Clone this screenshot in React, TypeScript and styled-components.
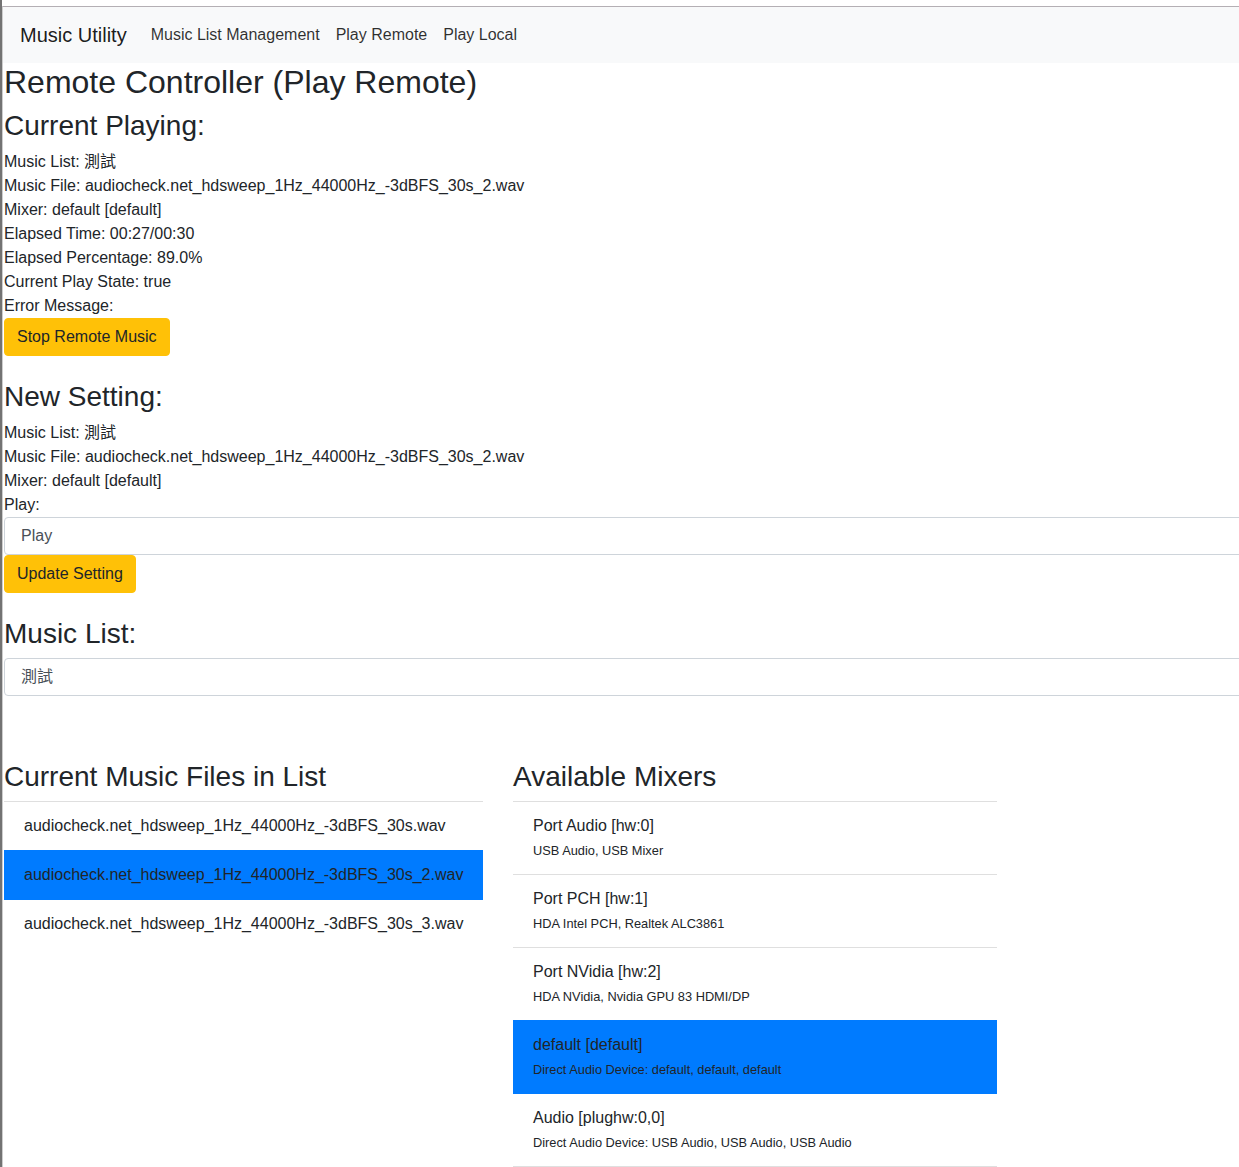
import React from "react";
import styled, { createGlobalStyle } from "styled-components";

const GlobalStyle = createGlobalStyle`
  html, body {
    margin: 0;
    padding: 0;
    background: #ffffff;
    overflow-x: hidden;
  }
  body {
    font-family: "Liberation Sans", Arial, "Noto Sans CJK TC", sans-serif;
    font-size: 16px;
    line-height: 1.5;
    color: #212529;
  }
  * { box-sizing: border-box; }
`;

const Frame = styled.div`
  border-left: 2px solid #737373;
  padding-top: 6px;
  min-height: 100vh;
`;

const Page = styled.div`
  border-left: 1px solid #cdcdcd;
  border-top: 1px solid #b4afb4;
  overflow: hidden;
  min-height: calc(100vh - 6px);
`;

const Navbar = styled.nav`
  display: flex;
  align-items: center;
  padding: 8px 16px 8px 17px;
  background: #f8f9fa;
`;

const Brand = styled.a`
  font-size: 20px;
  line-height: 30px;
  padding: 5px 0;
  margin-right: 16px;
  color: rgba(0, 0, 0, 0.9);
  text-decoration: none;
`;

const NavList = styled.div`
  display: flex;
`;

const NavLink = styled.a`
  padding: 8px;
  line-height: 24px;
  color: rgba(0, 0, 0, 0.82);
  text-decoration: none;
`;

const Content = styled.main`
  padding-left: 1px;
`;

const Title = styled.h2`
  margin: 0 0 8px;
  font-size: 32px;
  font-weight: 500;
  line-height: 1.2;
`;

const Heading = styled.h3<{ $gap?: number; $after?: number }>`
  margin: ${(p) => p.$gap ?? 0}px 0 ${(p) => p.$after ?? 7}px;
  font-size: 28px;
  font-weight: 500;
  line-height: 1.2;
`;

const InfoLine = styled.div`
  line-height: 24px;
`;

const WarnButton = styled.button`
  display: inline-block;
  font-family: inherit;
  font-size: 16px;
  line-height: 24px;
  padding: 6px 12px;
  color: #212529;
  background: #ffc107;
  border: 1px solid #ffc107;
  border-radius: 4px;
  cursor: pointer;
`;

const ButtonRow = styled.div`
  display: flex;
`;

const Select = styled.select`
  display: block;
  width: calc(100% + 40px);
  height: 38px;
  padding: 6px 12px 6px 16px;
  font-family: inherit;
  font-size: 16px;
  line-height: 24px;
  color: #495057;
  background: #ffffff;
  border: 1px solid #ced4da;
  border-radius: 4px;
  appearance: none;
  -webkit-appearance: none;
`;

const Columns = styled.div`
  display: grid;
  grid-template-columns: 479px 484px;
  column-gap: 30px;
  margin-top: 64px;
  align-items: start;
`;

const Column = styled.section``;

const FileList = styled.div`
  border-top: 1px solid rgba(0, 0, 0, 0.125);
`;

const FileItem = styled.div<{ $active?: boolean }>`
  padding: 12px 20px;
  line-height: 24px;
  border-bottom: 1px solid ${(p) => (p.$active ? "#007bff" : "transparent")};
  background: ${(p) => (p.$active ? "#007bff" : "transparent")};
  box-shadow: ${(p) => (p.$active ? "0 -1px 0 #007bff" : "none")};
  color: #212529;
`;

const MixerList = styled.div`
  border-top: 1px solid rgba(0, 0, 0, 0.125);
`;

const MixerItem = styled.div<{ $active?: boolean }>`
  padding: 12px 20px;
  border-bottom: 1px solid ${(p) => (p.$active ? "#007bff" : "rgba(0, 0, 0, 0.125)")};
  background: ${(p) => (p.$active ? "#007bff" : "transparent")};
  box-shadow: ${(p) => (p.$active ? "0 -1px 0 #007bff" : "none")};
  color: #212529;
`;

const MixerName = styled.div`
  font-size: 16px;
  line-height: 24px;
  height: 24px;
`;

const MixerDesc = styled.div`
  font-size: 16px;
  line-height: 1.5;
  height: 24px;
  & > small {
    font-size: 80%;
  }
`;

const files = [
  "audiocheck.net_hdsweep_1Hz_44000Hz_-3dBFS_30s.wav",
  "audiocheck.net_hdsweep_1Hz_44000Hz_-3dBFS_30s_2.wav",
  "audiocheck.net_hdsweep_1Hz_44000Hz_-3dBFS_30s_3.wav",
];

const mixers = [
  { name: "Port Audio [hw:0]", desc: "USB Audio, USB Mixer" },
  { name: "Port PCH [hw:1]", desc: "HDA Intel PCH, Realtek ALC3861" },
  { name: "Port NVidia [hw:2]", desc: "HDA NVidia, Nvidia GPU 83 HDMI/DP" },
  { name: "default [default]", desc: "Direct Audio Device: default, default, default", active: true },
  { name: "Audio [plughw:0,0]", desc: "Direct Audio Device: USB Audio, USB Audio, USB Audio" },
];

export default function App() {
  return (
    <>
      <GlobalStyle />
      <Frame>
        <Page>
          <Navbar>
            <Brand href="#">Music Utility</Brand>
            <NavList>
              <NavLink href="#">Music List Management</NavLink>
              <NavLink href="#">Play Remote</NavLink>
              <NavLink href="#">Play Local</NavLink>
            </NavList>
          </Navbar>
          <Content>
            <Title>Remote Controller (Play Remote)</Title>
            <Heading>Current Playing:</Heading>
            <InfoLine>Music List: 測試</InfoLine>
            <InfoLine>Music File: audiocheck.net_hdsweep_1Hz_44000Hz_-3dBFS_30s_2.wav</InfoLine>
            <InfoLine>Mixer: default [default]</InfoLine>
            <InfoLine>Elapsed Time: 00:27/00:30</InfoLine>
            <InfoLine>Elapsed Percentage: 89.0%</InfoLine>
            <InfoLine>Current Play State: true</InfoLine>
            <InfoLine>Error Message:</InfoLine>
            <ButtonRow>
              <WarnButton>Stop Remote Music</WarnButton>
            </ButtonRow>

            <Heading $gap={24}>New Setting:</Heading>
            <InfoLine>Music List: 測試</InfoLine>
            <InfoLine>Music File: audiocheck.net_hdsweep_1Hz_44000Hz_-3dBFS_30s_2.wav</InfoLine>
            <InfoLine>Mixer: default [default]</InfoLine>
            <InfoLine>Play:</InfoLine>
            <Select defaultValue="play">
              <option value="play">Play</option>
              <option value="stop">Stop</option>
            </Select>
            <ButtonRow>
              <WarnButton>Update Setting</WarnButton>
            </ButtonRow>

            <Heading $gap={24} $after={8}>Music List:</Heading>
            <Select defaultValue="test">
              <option value="test">測試</option>
            </Select>

            <Columns>
              <Column>
                <Heading>Current Music Files in List</Heading>
                <FileList>
                  {files.map((f, i) => (
                    <FileItem key={f} $active={i === 1}>
                      {f}
                    </FileItem>
                  ))}
                </FileList>
              </Column>
              <Column>
                <Heading>Available Mixers</Heading>
                <MixerList>
                  {mixers.map((m) => (
                    <MixerItem key={m.name} $active={m.active}>
                      <MixerName>{m.name}</MixerName>
                      <MixerDesc>
                        <small>{m.desc}</small>
                      </MixerDesc>
                    </MixerItem>
                  ))}
                </MixerList>
              </Column>
            </Columns>
          </Content>
        </Page>
      </Frame>
    </>
  );
}
